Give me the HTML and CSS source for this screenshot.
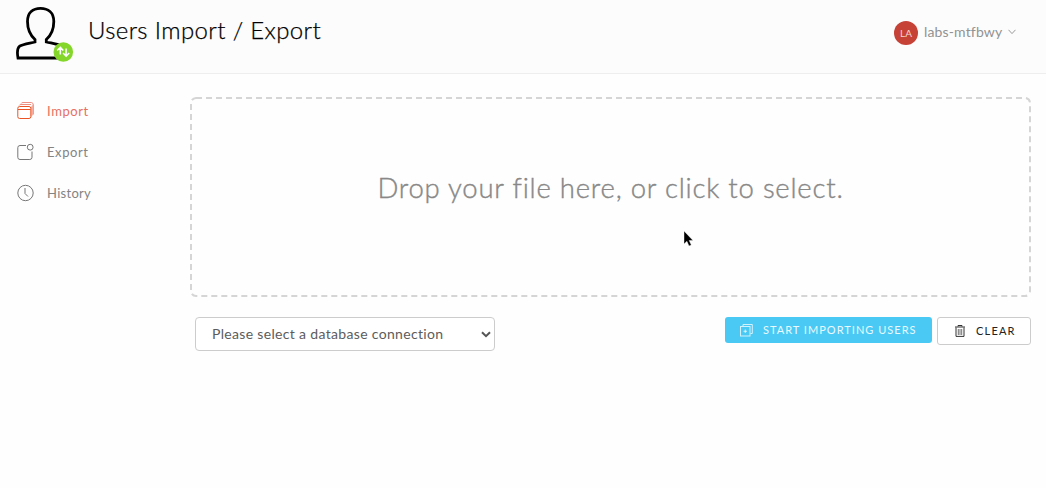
FILE: index.html
```html
<!DOCTYPE html>
<html lang="en">
<head>
<meta charset="utf-8">
<title>Users Import / Export</title>
<link rel="stylesheet" href="styles.css">
</head>
<body>
<header class="header">
  <svg class="logo" width="60" height="60" viewBox="0 0 60 60">
    <path d="M19 37V34.500C13.500 29.500 11.500 22.500 11.500 16.500C11.500 7.500 17 3.300 24.500 3.300S37.800 7.500 37.800 16.500C37.800 22.500 36 29.500 30.300 34.500V37C39 39 47 39.500 47.500 44.500V53H2C1 47.500 1.500 43 3.500 41.300C7 39.300 13 38.500 19 37Z" fill="none" stroke="#000" stroke-width="2.800"/>
    <circle cx="47.300" cy="47" r="9.800" fill="#84d62b"/>
    <path d="M44.300 49.500V42.500M41.200 45.500L44.300 42.300L47.300 45.500M50.100 43.500V50.800M47.100 48L50.100 51.200L53.200 48" fill="none" stroke="#fff" stroke-width="1.500"/>
  </svg>
  <h1 class="title">Users Import / Export</h1>
  <div class="account">
    <span class="avatar">LA</span>
    <span class="account-name">labs-mtfbwy</span>
    <svg class="caret" width="8" height="6" viewBox="0 0 8 6"><path d="M.5 .8L4 4.600L7.500 .8" fill="none" stroke="#999"/></svg>
  </div>
</header>
<div class="layout">
  <nav class="sidebar">
    <a class="item active">
      <svg width="18" height="18" viewBox="0 0 18 18" fill="none">
        <path d="M14 4.500L16.500 2V12L14 15.500Z" fill="#f7b5ab"/>
        <path d="M2.200 3.500Q2.500 2.500 4 2.500H14M4.200 1.500Q4.500 .5 6 .5H14.200Q16.300 .5 16.300 3V12.500" stroke="#ec8577" stroke-width=".9"/>
        <rect x=".8" y="4.500" width="13" height="12" rx="1.800" fill="#fff" stroke="#eb5424"/>
        <path d="M1 7.500H13.500" stroke="#eb5424"/>
      </svg>
      <span>Import</span>
    </a>
    <a class="item">
      <svg width="18" height="18" viewBox="0 0 18 18" fill="none" stroke="#777">
        <path d="M9 2.500H3Q.8 2.500 .8 4.700V14.300Q.8 16.500 3 16.500H12.800Q15 16.500 15 14.300V8.500"/>
        <circle cx="13.200" cy="4.200" r="2.900"/>
      </svg>
      <span>Export</span>
    </a>
    <a class="item">
      <svg width="18" height="18" viewBox="0 0 18 18" fill="none" stroke="#777">
        <circle cx="8.500" cy="9" r="7.700"/><path d="M8 4V9.500L11 12.500"/>
      </svg>
      <span class="history">History</span>
    </a>
  </nav>
  <main class="main">
    <div class="dropzone">
      <svg class="outline" width="841" height="200" viewBox="0 0 841 200"><rect x="1" y="1" width="839" height="198" rx="5"/></svg>
      <span class="drop-text">Drop your file here, or click to select.</span>
    </div>
    <div class="controls">
      <div class="select">
        <span class="select-label">Please select a database connection</span>
        <svg width="10" height="7" viewBox="0 0 10 7"><path d="M1 1.200L5 5.200L9 1.200" fill="none" stroke="#555" stroke-width="2"/></svg>
      </div>
      <div class="buttons">
        <button class="btn primary">
          <svg width="13" height="13" viewBox="0 0 13 13" fill="none" stroke="#fff" stroke-opacity=".75">
            <rect x=".5" y="2.500" width="9.500" height="9.500"/><path d="M3 2V.5H12.300V9.500H10.500M5.250 5.500V9M3.500 7.250H7"/>
          </svg>
          <span class="btn-label">START IMPORTING USERS</span>
        </button>
        <button class="btn clear">
          <svg width="10" height="12" viewBox="0 0 10 12" fill="none" stroke="#333">
            <path d="M0 2H10M3 1.500V.5H7V1.500M1 2.500V11.400H9V2.500"/><path d="M3.300 4V10M5 4V10M6.700 4V10" stroke-width=".7"/>
          </svg>
          <span class="btn-label">CLEAR</span>
        </button>
      </div>
    </div>
  </main>
</div>
<svg class="pointer" width="12" height="18" viewBox="0 0 12 18"><path d="M1 1V14L3.900 11.300L6 16L8.300 15L6.200 10.500H10Z" fill="#000" stroke="#fff" stroke-width=".4"/></svg>
</body>
</html>
```

FILE: styles.css
```css
* { box-sizing: border-box; }
body {
  margin: 0;
  height: 488px;
  overflow: hidden;
  background: #fefefe;
  font-family: Lato, "Liberation Sans", sans-serif;
  color: #777;
}
.header {
  display: flex;
  align-items: flex-start;
  height: 74px;
  padding: 5px 30px 0 16px;
  background: #fcfcfc;
  border-bottom: 1px solid #eee;
}
.logo { flex: none; }
.title {
  margin: 8px 0 0 12px;
  font-size: 24px;
  line-height: 34px;
  font-weight: 300;
  letter-spacing: .37px;
  color: #000;
  -webkit-text-stroke: .25px #000;
  white-space: nowrap;
}
.account {
  display: flex;
  align-items: center;
  height: 24px;
  margin: 16px 0 0 auto;
}
.avatar {
  width: 24px;
  height: 24px;
  border-radius: 50%;
  background: #c64136;
  color: #f4d5d1;
  font-size: 10px;
  line-height: 24px;
  text-align: center;
}
.account-name {
  margin: -4px 0 0 6px;
  width: 78px;
  font-size: 14px;
  letter-spacing: .15px;
  color: #929292;
  white-space: nowrap;
}
.caret { margin: -2px 0 0 6px; }
.layout { display: flex; }
.sidebar {
  width: 190px;
  padding: 16px 0 0 17px;
}
.item {
  display: flex;
  align-items: center;
  gap: 12px;
  height: 41px;
  font-size: 13px;
  letter-spacing: .6px;
  color: #838383;
}
.item.active { color: #e8705f; }
.history { letter-spacing: .3px; }
.main { width: 841px; padding-top: 23px; }
.dropzone {
  display: grid;
  place-items: center;
  height: 200px;
}
.dropzone > * { grid-area: 1 / 1; }
.outline rect {
  fill: none;
  stroke: #d5d5d5;
  stroke-width: 2;
  stroke-dasharray: 6 4;
}
.drop-text {
  margin-top: -20px;
  font-size: 27.5px;
  font-weight: 300;
  letter-spacing: .78px;
  color: #888;
  -webkit-text-stroke: .4px #888;
  white-space: nowrap;
}
.controls {
  display: flex;
  justify-content: space-between;
  padding: 20px 0 0 5px;
}
.select {
  display: flex;
  align-items: center;
  justify-content: space-between;
  width: 300px;
  height: 34px;
  padding: 0 3px 0 16px;
  border: 1px solid #ccc;
  border-radius: 4px;
  background: #fff;
  font-size: 14px;
  letter-spacing: .33px;
  color: #5c5c5c;
  white-space: nowrap;
}
.select-label { margin-top: -2px; }
.buttons { display: flex; align-items: flex-start; gap: 5px; }
.btn {
  display: flex;
  align-items: center;
  margin: 0;
  border: 0;
  border-radius: 3px;
  font-family: inherit;
  font-size: 11px;
  white-space: nowrap;
}
.btn-label { margin-top: -2px; }
.primary {
  gap: 10px;
  width: 207px;
  height: 26px;
  padding: 0 0 0 15px;
  background: #4ac9f4;
  color: #e9f9ff;
  letter-spacing: 1.02px;
}
.clear {
  gap: 11px;
  width: 94px;
  height: 28px;
  padding: 0 0 0 17px;
  border: 1px solid #ccc;
  background: #fff;
  color: #222;
  letter-spacing: 1.2px;
}
.pointer { position: absolute; left: 683px; top: 230px; }
```
